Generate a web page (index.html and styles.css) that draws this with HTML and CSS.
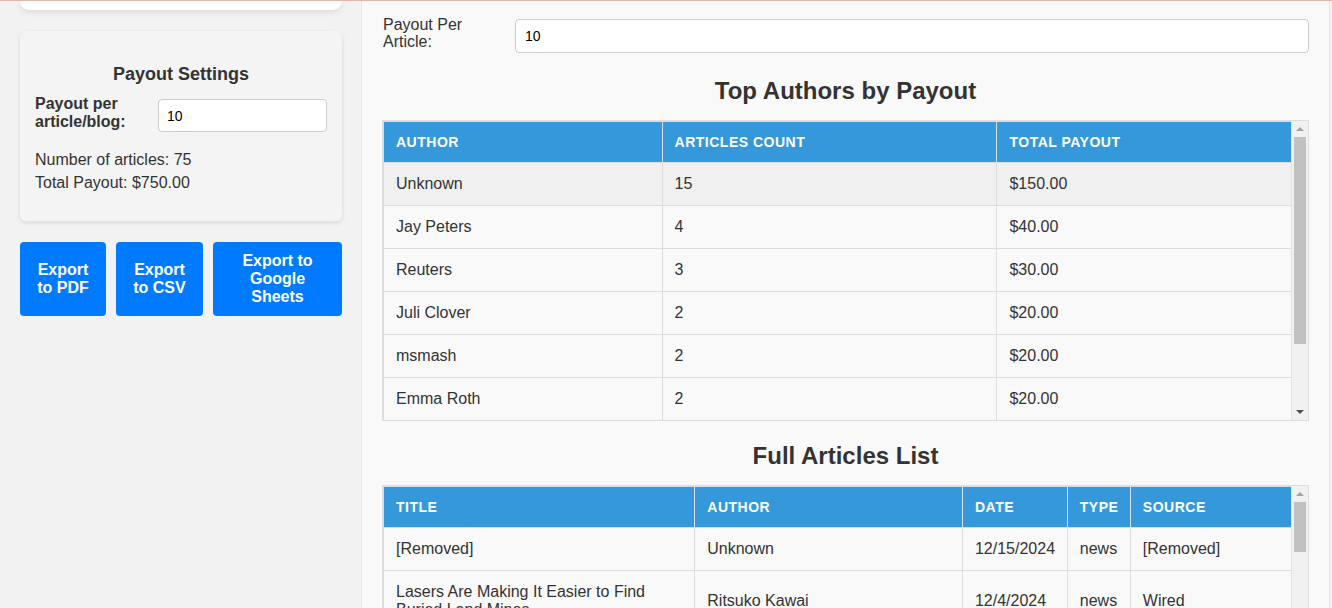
FILE: index.html
```html
<!DOCTYPE html>
<html lang="en">
<head>
<meta charset="utf-8">
<title>Payout Dashboard</title>
<link rel="stylesheet" href="styles.css">
</head>
<body>
<div class="app">
  <aside class="sidebar">
    <div class="card-top"></div>
    <section class="settings">
      <h3 class="settings-title">Payout Settings</h3>
      <div class="settings-row">
        <label class="settings-label" for="ppa">Payout per article/blog:</label>
        <input id="ppa" class="settings-input" type="text" value="10">
      </div>
      <p class="stat">Number of articles: 75</p>
      <p class="stat">Total Payout: $750.00</p>
    </section>
    <div class="exports">
      <button class="btn btn-pdf">Export to PDF</button>
      <button class="btn btn-csv">Export to CSV</button>
      <button class="btn btn-sheets">Export to Google Sheets</button>
    </div>
  </aside>
  <main class="main">
    <div class="field-row">
      <label class="field-label" for="ppa2">Payout Per Article:</label>
      <input id="ppa2" class="field-input" type="text" value="10">
    </div>
    <h2 class="section-title first">Top Authors by Payout</h2>
    <div class="table-wrap">
      <div class="table-view">
        <table class="data">
          <colgroup><col class="c-a1"><col class="c-a2"><col class="c-a3"></colgroup>
          <thead><tr><th>Author</th><th>Articles Count</th><th>Total Payout</th></tr></thead>
          <tbody>
            <tr class="hl"><td>Unknown</td><td>15</td><td>$150.00</td></tr>
            <tr><td>Jay Peters</td><td>4</td><td>$40.00</td></tr>
            <tr><td>Reuters</td><td>3</td><td>$30.00</td></tr>
            <tr><td>Juli Clover</td><td>2</td><td>$20.00</td></tr>
            <tr><td>msmash</td><td>2</td><td>$20.00</td></tr>
            <tr><td>Emma Roth</td><td>2</td><td>$20.00</td></tr>
            <tr><td>Wes Davis</td><td>2</td><td>$20.00</td></tr>
            <tr><td>Richard Lawler</td><td>1</td><td>$10.00</td></tr>
          </tbody>
        </table>
      </div>
      <div class="vscroll">
        <div class="sb-btn"><span class="arrow-up"></span></div>
        <div class="sb-track"><div class="sb-thumb thumb-a"></div></div>
        <div class="sb-btn"><span class="arrow-down"></span></div>
      </div>
    </div>
    <h2 class="section-title">Full Articles List</h2>
    <div class="table-wrap">
      <div class="table-view">
        <table class="data">
          <colgroup><col class="c-b1"><col class="c-b2"><col class="c-b3"><col class="c-b4"><col class="c-b5"></colgroup>
          <thead><tr><th>Title</th><th>Author</th><th>Date</th><th>Type</th><th>Source</th></tr></thead>
          <tbody>
            <tr><td>[Removed]</td><td>Unknown</td><td>12/15/2024</td><td>news</td><td>[Removed]</td></tr>
            <tr><td>Lasers Are Making It Easier to Find Buried Land Mines</td><td>Ritsuko Kawai</td><td>12/4/2024</td><td>news</td><td>Wired</td></tr>
            <tr><td>Apple Plans Foldable iPhone for 2026</td><td>Juli Clover</td><td>12/14/2024</td><td>news</td><td>MacRumors</td></tr>
            <tr><td>Google Unveils New Quantum Chip</td><td>Jay Peters</td><td>12/13/2024</td><td>news</td><td>The Verge</td></tr>
          </tbody>
        </table>
      </div>
      <div class="vscroll">
        <div class="sb-btn"><span class="arrow-up"></span></div>
        <div class="sb-track"><div class="sb-thumb thumb-b"></div></div>
        <div class="sb-btn"><span class="arrow-down"></span></div>
      </div>
    </div>
  </main>
  <div class="edge"></div>
</div>
</body>
</html>
```

FILE: styles.css
```css
* { box-sizing: border-box; }

html, body {
  margin: 0;
  padding: 0;
  height: 100%;
  overflow: hidden;
}

body {
  font-family: "Liberation Sans", Arial, sans-serif;
  color: #333;
  background: #f1f1f1;
  border-top: 1px solid #e2b3ab;
}

.app {
  display: flex;
  height: 607px;
}

/* Sidebar */
.sidebar {
  width: 362px;
  flex: 0 0 362px;
  background: #f2f2f2;
  border-right: 1px solid #e9e9e9;
  padding: 0 19px 0 20px;
}

.card-top {
  height: 9px;
  background: #fff;
  border-radius: 0 0 10px 10px;
  box-shadow: 0 2px 6px rgba(0, 0, 0, 0.1);
}

.settings {
  margin-top: 21px;
  background: #f4f4f4;
  border-radius: 6px;
  box-shadow: 0 2px 5px rgba(0, 0, 0, 0.1);
  padding: 32px 15px 27px;
}

.settings-title {
  margin: 0 0 10px;
  font-size: 18px;
  line-height: 22px;
  text-align: center;
  font-weight: bold;
}

.settings-row {
  display: flex;
  align-items: flex-start;
  margin-bottom: 16px;
}

.settings-label {
  width: 123px;
  flex: 0 0 123px;
  font-weight: bold;
  font-size: 16px;
  line-height: 18px;
}

.settings-input {
  width: 169px;
  height: 33px;
  margin-top: 4px;
  border: 1px solid #ccc;
  border-radius: 4px;
  background: #fff;
  font-family: "Liberation Sans", Arial, sans-serif;
  font-size: 14px;
  color: #000;
  padding: 0 8px;
  outline: none;
}

.stat {
  margin: 0;
  font-size: 16px;
  line-height: 23px;
}

.exports {
  display: flex;
  gap: 10px;
  margin-top: 21px;
}

.btn {
  height: 74px;
  border: none;
  border-radius: 4px;
  background: #007bff;
  color: #fff;
  font-family: "Liberation Sans", Arial, sans-serif;
  font-weight: bold;
  font-size: 16px;
  line-height: 18px;
  padding: 0 10px;
  text-align: center;
}

.btn-pdf { flex: 0 0 86px; }
.btn-csv { flex: 0 0 87px; }
.btn-sheets { flex: 0 0 129px; padding: 0 28px; }

/* Main */
.main {
  flex: 1;
  background: #f9f9f9;
  border-right: 1px solid #e6e6e6;
  padding: 15px 20px 0 20px;
  overflow: hidden;
}

.field-row {
  display: flex;
  align-items: flex-start;
  gap: 10px;
  padding-left: 1px;
}

.field-label {
  width: 122px;
  flex: 0 0 122px;
  font-size: 16px;
  line-height: 17px;
}

.field-input {
  flex: 1;
  height: 34px;
  margin-top: 3px;
  border: 1px solid #ccc;
  border-radius: 4px;
  background: #fff;
  font-family: "Liberation Sans", Arial, sans-serif;
  font-size: 14px;
  color: #000;
  padding: 0 9px;
  outline: none;
}

.section-title {
  margin: 21px 0 15px;
  font-size: 24px;
  line-height: 28px;
  text-align: center;
  font-weight: bold;
}

.section-title.first { margin-top: 24px; }

.table-wrap {
  display: flex;
  height: 301px;
  border: 1px solid #ddd;
  background: #f9f9f9;
}

.table-view {
  flex: 1;
  min-width: 0;
  overflow: hidden;
}

/* Scrollbar drawn in flow */
.vscroll {
  flex: 0 0 17px;
  display: flex;
  flex-direction: column;
  background: #f1f1f1;
  border-left: 1px solid #e4e4e4;
}

.sb-btn {
  flex: 0 0 16px;
  display: flex;
  align-items: center;
  justify-content: center;
}

.arrow-up {
  width: 0;
  height: 0;
  border-left: 4px solid transparent;
  border-right: 4px solid transparent;
  border-bottom: 4px solid #a3a3a3;
}

.arrow-down {
  width: 0;
  height: 0;
  border-left: 4px solid transparent;
  border-right: 4px solid transparent;
  border-top: 4px solid #505050;
}

.sb-track {
  flex: 1;
  padding: 0 1px 0 1px;
}

.sb-thumb {
  background: #c1c1c1;
  margin: 0 1px 0 1px;
}

.thumb-a { height: 207px; }
.thumb-b { height: 50px; }

.data {
  width: 100%;
  border-collapse: collapse;
  table-layout: fixed;
}

.data th,
.data td {
  border: 1px solid #ddd;
  text-align: left;
  vertical-align: middle;
}

.data tr > :last-child { border-right: none; }

.data th {
  background: #3498db;
  color: #fff;
  font-size: 14px;
  line-height: 16px;
  font-weight: bold;
  text-transform: uppercase;
  letter-spacing: 0.5px;
  padding: 12px 12px 12px;
}

.data td {
  font-size: 16px;
  line-height: 18px;
  padding: 12px 12px;
  color: #333;
}

.data tr.hl td { background: #f0f0f0; }

.c-a1 { width: 30.7%; }
.c-a2 { width: 36.9%; }
.c-a3 { width: 32.4%; }

.c-b1 { width: 34.3%; }
.c-b2 { width: 29.5%; }
.c-b3 { width: 11.55%; }
.c-b4 { width: 6.95%; }
.c-b5 { width: 17.7%; }

.edge {
  flex: 0 0 2px;
  background: #f1f1f1;
}
```
